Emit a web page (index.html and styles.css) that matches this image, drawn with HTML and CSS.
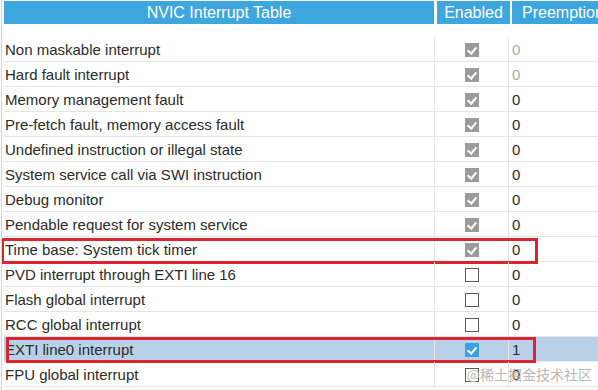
FILE: index.html
```html
<!DOCTYPE html>
<html lang="en">
<head>
  <meta charset="UTF-8" />
  <title>NVIC Interrupt Table</title>
  <link rel="stylesheet" href="styles.css">
</head>
<body>
  <div class="panel">
    <div class="head">
      <div class="hcell name">NVIC Interrupt Table</div>
      <div class="hcell enabled">Enabled</div>
      <div class="hcell prio">Preemption Priority</div>
    </div>
    <div class="rows">
      <div class="row"><div class="cell name">Non maskable interrupt</div><div class="cell enabled"><span class="box on dis"></span></div><div class="cell prio muted">0</div></div>
      <div class="row"><div class="cell name">Hard fault interrupt</div><div class="cell enabled"><span class="box on dis"></span></div><div class="cell prio muted">0</div></div>
      <div class="row"><div class="cell name">Memory management fault</div><div class="cell enabled"><span class="box on dis"></span></div><div class="cell prio">0</div></div>
      <div class="row"><div class="cell name">Pre-fetch fault, memory access fault</div><div class="cell enabled"><span class="box on dis"></span></div><div class="cell prio">0</div></div>
      <div class="row"><div class="cell name">Undefined instruction or illegal state</div><div class="cell enabled"><span class="box on dis"></span></div><div class="cell prio">0</div></div>
      <div class="row"><div class="cell name">System service call via SWI instruction</div><div class="cell enabled"><span class="box on dis"></span></div><div class="cell prio">0</div></div>
      <div class="row"><div class="cell name">Debug monitor</div><div class="cell enabled"><span class="box on dis"></span></div><div class="cell prio">0</div></div>
      <div class="row"><div class="cell name">Pendable request for system service</div><div class="cell enabled"><span class="box on dis"></span></div><div class="cell prio">0</div></div>
      <div class="row marked"><div class="cell name">Time base: System tick timer</div><div class="cell enabled"><span class="box on dis"></span></div><div class="cell prio">0</div><div class="mark mark-a"></div></div>
      <div class="row"><div class="cell name">PVD interrupt through EXTI line 16</div><div class="cell enabled"><span class="box"></span></div><div class="cell prio">0</div></div>
      <div class="row"><div class="cell name">Flash global interrupt</div><div class="cell enabled"><span class="box"></span></div><div class="cell prio">0</div></div>
      <div class="row"><div class="cell name">RCC global interrupt</div><div class="cell enabled"><span class="box"></span></div><div class="cell prio">0</div></div>
      <div class="row marked selected"><div class="cell name">EXTI line0 interrupt</div><div class="cell enabled"><span class="box on"></span></div><div class="cell prio">1</div><div class="mark mark-b"></div></div>
      <div class="row"><div class="cell name">FPU global interrupt</div><div class="cell enabled"><span class="box"></span></div><div class="cell prio">0</div></div>
    </div>
  </div>
  <div class="watermark">@稀土掘金技术社区</div>
</body>
</html>
```

FILE: styles.css
```css
body {
  margin: 0;
  font-family: "Liberation Sans", Arial, "Noto Sans CJK SC", sans-serif;
  background: #fff;
  overflow: hidden;
}

.panel {
  width: 598px;
  height: 390px;
  border-left: 1px solid #d4d4d4;
  margin-left: 1px;
  padding: 1px 0 0 2px;
  box-sizing: border-box;
  overflow: hidden;
}

.head {
  display: flex;
  height: 23px;
}

.hcell {
  background: #3ea6de;
  color: #fff;
  font-size: 16px;
  line-height: 23px;
  white-space: nowrap;
  overflow: hidden;
  flex-shrink: 0;
}

.hcell.name {
  width: 430px;
  text-align: center;
  margin-right: 3px;
}

.hcell.enabled {
  width: 73px;
  text-align: center;
  margin-right: 2px;
}

.hcell.prio {
  width: 100px;
  padding-left: 10px;
}

.rows {
  margin-top: 13px;
}

.row {
  display: flex;
  height: 25px;
  border-bottom: 1px solid #e6e6e6;
  box-sizing: border-box;
  position: relative;
  font-size: 15px;
  color: #2b2b2b;
}

.row.selected {
  background: #b9d1e8;
}

.cell {
  line-height: 26px;
  white-space: nowrap;
}

.cell.name {
  width: 430px;
  padding-left: 1px;
  box-sizing: border-box;
}

.cell.enabled {
  width: 74px;
  border-left: 1px solid #e6e6e6;
  display: flex;
  justify-content: center;
  align-items: center;
  box-sizing: border-box;
}

.cell.prio {
  flex: 1;
  border-left: 1px solid #e6e6e6;
  padding-left: 3px;
}

.cell.prio.muted {
  color: #aaa;
}

.box {
  width: 12px;
  height: 12px;
  border: 1px solid #5a5a5a;
  background: #fff;
  position: relative;
  margin: 2px 0 0 1px;
}

.box.on {
  background: #3ba2e2;
  border-color: #3ba2e2;
}

.box.on.dis {
  background: #9b9b9b;
  border-color: #9b9b9b;
}

.box.on::after {
  content: "";
  position: absolute;
  left: 3px;
  top: 1px;
  width: 4px;
  height: 7px;
  border-right: 2px solid #fff;
  border-bottom: 2px solid #fff;
  transform: rotate(40deg);
}

.mark {
  position: absolute;
  border: 3px solid #dc2430;
  box-sizing: border-box;
  pointer-events: none;
}

.mark-a {
  left: -3px;
  top: 1px;
  width: 537px;
  height: 26px;
}

.mark-b {
  left: 2px;
  top: 0;
  width: 530px;
  height: 26px;
}

.watermark {
  position: absolute;
  right: 6px;
  bottom: 6px;
  font-size: 14px;
  color: #b8b8b8;
  font-family: "Noto Sans CJK SC", sans-serif;
}
```
